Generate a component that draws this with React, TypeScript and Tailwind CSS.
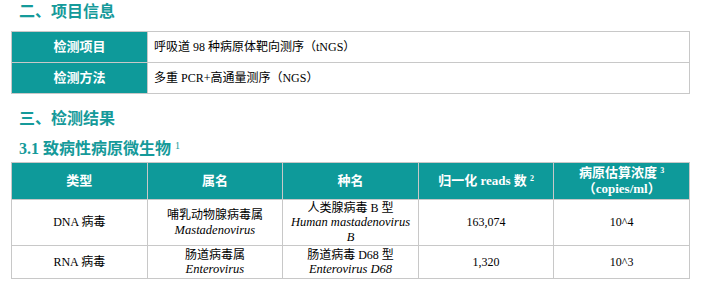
import React from "react";

const teal = "bg-[#0e9a9a]";

export default function App() {
  const serif = { fontFamily: '"Liberation Serif", "Noto Sans CJK SC", serif' };
  return (
    <div
      className="w-[701px] h-[284px] bg-white pl-[11px] pr-[11px] text-black"
      style={serif}
    >
      <h2 className="pl-[8px] pt-[1px] h-[31px] text-[16px] leading-[22px] font-bold text-[#159a9a]">
        二、项目信息
      </h2>

      <table className="w-[679px] border-collapse text-[12px] table-fixed">
        <tbody>
          <tr className="h-[31px]">
            <td className={`w-[136px] border border-[#c8c8c8] ${teal} text-white font-bold text-center text-[13px]`}>
              检测项目
            </td>
            <td className="border border-[#c8c8c8] pl-[6px]">呼吸道 98 种病原体靶向测序（tNGS）</td>
          </tr>
          <tr className="h-[31px]">
            <td className={`border border-[#c8c8c8] ${teal} text-white font-bold text-center text-[13px]`}>
              检测方法
            </td>
            <td className="border border-[#c8c8c8] pl-[6px]">多重 PCR+高通量测序（NGS）</td>
          </tr>
        </tbody>
      </table>

      <h2 className="pl-[8px] mt-[14px] text-[16px] leading-[22px] font-bold text-[#159a9a]">
        三、检测结果
      </h2>
      <h3 className="pl-[8px] mt-[8px] h-[22px] text-[16px] leading-[22px] font-bold text-[#159a9a]">
        3.1 致病性病原微生物 <sup className="text-[10px] font-normal">1</sup>
      </h3>

      <table className="mt-[2px] w-[679px] border-collapse text-[12px] table-fixed text-center">
        <thead>
          <tr className={`h-[37px] ${teal} text-white font-bold text-[13px] leading-[16px]`}>
            <th className="border border-[#c8c8c8]">类型</th>
            <th className="border border-[#c8c8c8]">属名</th>
            <th className="border border-[#c8c8c8]">种名</th>
            <th className="border border-[#c8c8c8]">
              归一化 reads 数 <sup className="text-[8px]">2</sup>
            </th>
            <th className="border border-[#c8c8c8]">
              <div>
                病原估算浓度 <sup className="text-[8px]">3</sup>
              </div>
              <div>（copies/ml）</div>
            </th>
          </tr>
        </thead>
        <tbody className="leading-[14.5px]">
          <tr className="h-[46px]">
            <td className="border border-[#c8c8c8]">DNA 病毒</td>
            <td className="border border-[#c8c8c8] px-[6px]">
              <div>哺乳动物腺病毒属</div>
              <div className="italic text-[12.5px]">Mastadenovirus</div>
            </td>
            <td className="border border-[#c8c8c8] px-[6px]">
              <div>人类腺病毒 B 型</div>
              <div className="italic text-[12.5px]">Human mastadenovirus B</div>
            </td>
            <td className="border border-[#c8c8c8]">163,074</td>
            <td className="border border-[#c8c8c8]">10^4</td>
          </tr>
          <tr className="h-[33px]">
            <td className="border border-[#c8c8c8]">RNA 病毒</td>
            <td className="border border-[#c8c8c8] px-[6px]">
              <div>肠道病毒属</div>
              <div className="italic text-[12.5px]">Enterovirus</div>
            </td>
            <td className="border border-[#c8c8c8] px-[6px]">
              <div>肠道病毒 D68 型</div>
              <div className="italic text-[12.5px]">Enterovirus D68</div>
            </td>
            <td className="border border-[#c8c8c8]">1,320</td>
            <td className="border border-[#c8c8c8]">10^3</td>
          </tr>
        </tbody>
      </table>
    </div>
  );
}
